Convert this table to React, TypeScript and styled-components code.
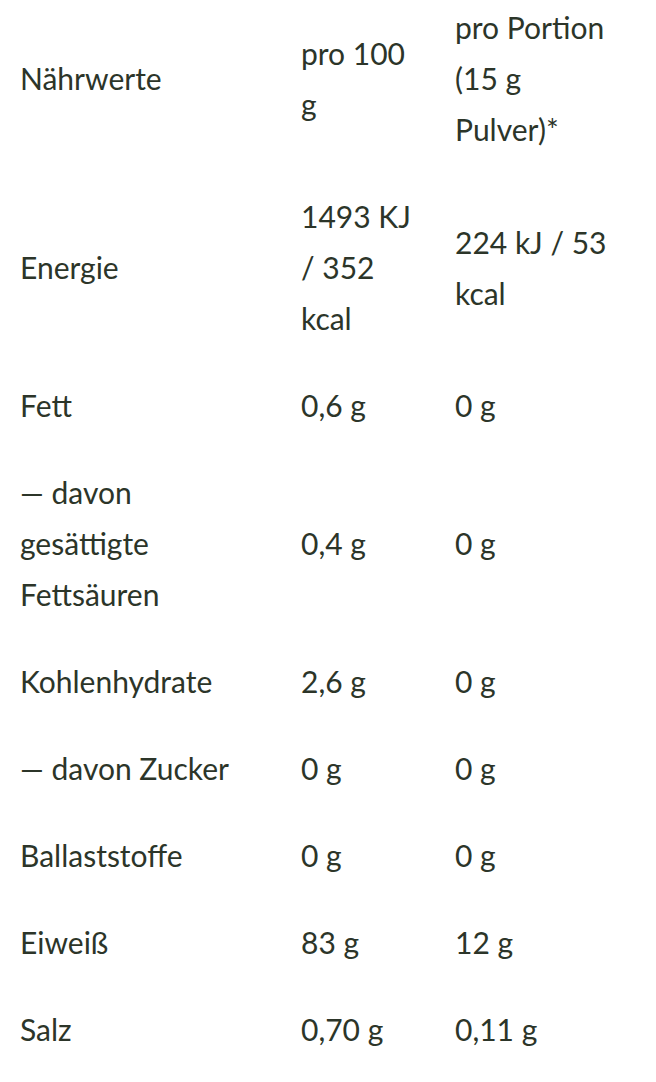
import React from "react";
import styled, { createGlobalStyle } from "styled-components";

const GlobalStyle = createGlobalStyle`
  html, body {
    margin: 0;
    padding: 0;
    background: #ffffff;
  }
  body {
    font-family: Lato, "Noto Sans", sans-serif;
    color: #2c3529;
  }
`;

const Viewport = styled.main`
  width: 656px;
  height: 1082px;
  overflow: hidden;
  background: #ffffff;
`;

const Table = styled.table`
  width: 656px;
  margin-top: -16px;
  border-collapse: collapse;
  table-layout: fixed;
  font-family: Lato, "Noto Sans", sans-serif;
  font-size: 30px;
  line-height: 51px;
  font-weight: 400;
  color: #2c3529;
`;

const Col = styled.col<{ $w: number }>`
  width: ${(p) => p.$w}px;
`;

const HeadCell = styled.th<{ $padRight: number }>`
  padding: 18px ${(p) => p.$padRight}px 18px 20px;
  vertical-align: middle;
  text-align: left;
  font-weight: 400;
`;

const Cell = styled.td<{ $padRight: number }>`
  padding: 18px ${(p) => p.$padRight}px 18px 20px;
  vertical-align: middle;
  text-align: left;
  font-weight: 400;
`;

type Row = { label: string; per100: string; perPortion: string };

const rows: Row[] = [
  { label: "Energie", per100: "1493 KJ / 352 kcal", perPortion: "224 kJ / 53 kcal" },
  { label: "Fett", per100: "0,6 g", perPortion: "0 g" },
  { label: "— davon gesättigte Fettsäuren", per100: "0,4 g", perPortion: "0 g" },
  { label: "Kohlenhydrate", per100: "2,6 g", perPortion: "0 g" },
  { label: "— davon Zucker", per100: "0 g", perPortion: "0 g" },
  { label: "Ballaststoffe", per100: "0 g", perPortion: "0 g" },
  { label: "Eiweiß", per100: "83 g", perPortion: "12 g" },
  { label: "Salz", per100: "0,70 g", perPortion: "0,11 g" },
];

const pads = [22, 22, 42];

export default function App() {
  return (
    <>
      <GlobalStyle />
      <Viewport>
        <Table>
          <colgroup>
            <Col $w={281} />
            <Col $w={154} />
            <Col $w={221} />
          </colgroup>
          <thead>
            <tr>
              <HeadCell $padRight={pads[0]}>Nährwerte</HeadCell>
              <HeadCell $padRight={pads[1]}>pro 100 g</HeadCell>
              <HeadCell $padRight={pads[2]}>pro Portion (15 g Pulver)*</HeadCell>
            </tr>
          </thead>
          <tbody>
            {rows.map((r) => (
              <tr key={r.label}>
                <Cell $padRight={pads[0]}>{r.label}</Cell>
                <Cell $padRight={pads[1]}>{r.per100}</Cell>
                <Cell $padRight={pads[2]}>{r.perPortion}</Cell>
              </tr>
            ))}
          </tbody>
        </Table>
      </Viewport>
    </>
  );
}
